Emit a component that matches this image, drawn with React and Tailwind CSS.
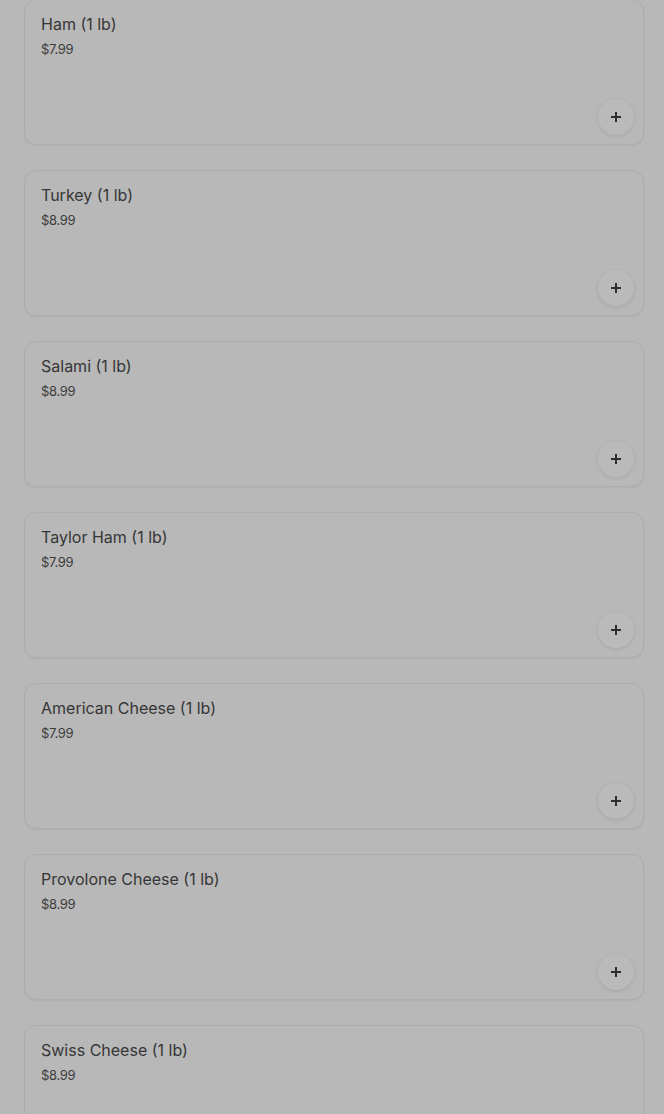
import React from "react";

const items = [
  ["Ham (1 lb)", "$7.99"],
  ["Turkey (1 lb)", "$8.99"],
  ["Salami (1 lb)", "$8.99"],
  ["Taylor Ham (1 lb)", "$7.99"],
  ["American Cheese (1 lb)", "$7.99"],
  ["Provolone Cheese (1 lb)", "$8.99"],
  ["Swiss Cheese (1 lb)", "$8.99"],
];

export default function App() {
  return (
    <div
      className="bg-[#b8b8b8] pl-[24px] pr-[20px] -mt-px flex flex-col gap-[25px] overflow-hidden h-[1115px]"
      style={{ fontFamily: "Inter, 'Noto Sans', sans-serif" }}
    >
      {items.map(([name, price]) => (
        <div
          key={name}
          className="relative shrink-0 h-[146px] rounded-xl border border-[#adadad] bg-[#b8b8b8] shadow-[0_1px_2px_rgba(0,0,0,0.05)] px-4 pt-[13px]"
        >
          <div className="text-[16px] leading-[22px] text-[#363636]">{name}</div>
          <div className="text-[13px] leading-[18px] mt-[5px] text-[#3d3d3d] tracking-[-0.3px]">{price}</div>
          <div className="absolute right-[9px] bottom-[9px] w-9 h-9 rounded-full bg-[#bababa] shadow-[0_1px_4px_rgba(0,0,0,0.1)] flex items-center justify-center">
            <svg width="12" height="12" viewBox="0 0 12 12">
              <path d="M6 1v10M1 6h10" stroke="#2e2e2e" strokeWidth="2" />
            </svg>
          </div>
        </div>
      ))}
    </div>
  );
}
